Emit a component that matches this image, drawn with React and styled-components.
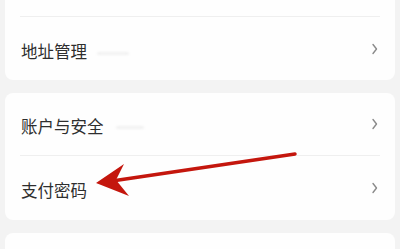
import React from "react";
import styled, { createGlobalStyle } from "styled-components";

const Global = createGlobalStyle`
  html, body { margin: 0; padding: 0; background: #f3f3f3; }
  body { font-family: "Noto Sans CJK SC", "Noto Sans", sans-serif; overflow: hidden; }
`;

const Screen = styled.div`
  position: relative;
  width: 400px;
  height: 249px;
  overflow: hidden;
  background: #f3f3f3;
`;

const Page = styled.div`
  display: flex;
  flex-direction: column;
  gap: 13px;
  padding: 0 5px;
  margin-top: -48px;
`;

const Card = styled.div`
  background: #fefefe;
  border-radius: 8px;
  display: flex;
  flex-direction: column;
`;

const Row = styled.div`
  box-sizing: border-box;
  height: ${(p) => p.$h || 64}px;
  display: flex;
  align-items: center;
  position: relative;
  padding-top: 4px;
  border-top: ${(p) => (p.$divider ? "1px solid #efefef" : "none")};
  margin: 0 ${(p) => (p.$divider ? "15px" : "0")};
  padding-left: ${(p) => (p.$divider ? "1px" : "16px")};
  padding-right: ${(p) => (p.$divider ? "1px" : "16px")};
`;

const Label = styled.span`
  font-size: 16.5px;
  color: #2e2e2e;
`;

const Blur = styled.span`
  margin-left: ${(p) => p.$ml || 8}px;
  margin-top: ${(p) => p.$mt || 0}px;
  width: ${(p) => p.$w || 30}px;
  height: 3px;
  background: #f1f1f1;
  border-radius: 2px;
  filter: blur(1px);
`;

const Spacer = styled.div`
  flex: 1;
`;

const ChevronBox = styled.span`
  display: flex;
  margin-top: -4px;
`;

const Chevron = () => (
  <ChevronBox>
    <svg width="8" height="12" viewBox="0 0 8 12">
      <polyline points="2,1.5 5.5,6 2,10.5" fill="none" stroke="#8a8a8a" strokeWidth="1.4" strokeLinecap="round" strokeLinejoin="round" />
    </svg>
  </ChevronBox>
);

const Arrow = styled.svg`
  position: absolute;
  left: 0;
  top: 0;
  pointer-events: none;
`;

const Item = ({ label, divider, h, blur }) => (
  <Row $divider={divider} $h={h}>
    <Label>{label}</Label>
    {blur}
    <Spacer />
    <Chevron />
  </Row>
);

export default function App() {
  return (
    <>
      <Global />
      <Screen>
        <Page>
          <Card>
            <Item label="" h={64} />
            <Item label="地址管理" divider h={64} blur={<Blur $ml={10} $mt={6} $w={32} />} />
          </Card>
          <Card>
            <Item label="账户与安全" h={62} blur={<Blur $ml={12} $mt={2} $w={28} />} />
            <Item label="支付密码" divider h={65} />
          </Card>
          <Card>
            <Row $h={64} />
          </Card>
        </Page>
        <Arrow width="400" height="249" viewBox="0 0 400 249">
          <line x1="295" y1="154" x2="112" y2="181" stroke="#c4160d" strokeWidth="3.5" strokeLinecap="round" />
          <polygon points="96,183 124,164 116,180 129,196" fill="#c4160d" />
        </Arrow>
      </Screen>
    </>
  );
}
